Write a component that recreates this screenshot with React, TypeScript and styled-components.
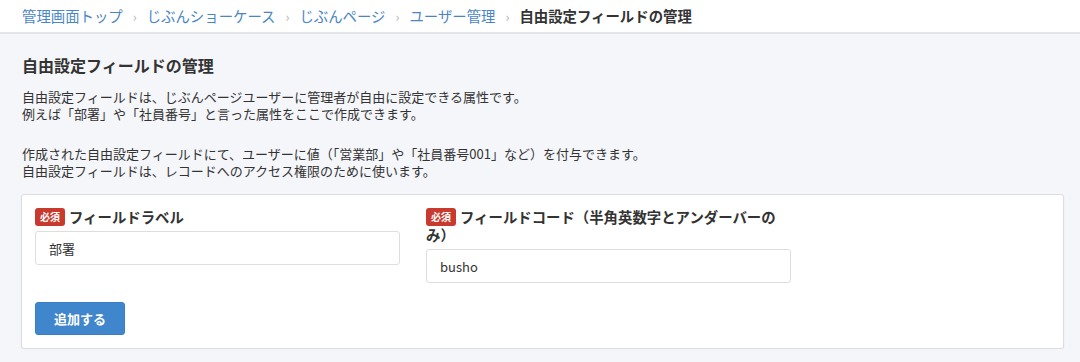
import React from 'react';
import styled, { createGlobalStyle } from 'styled-components';

const GlobalStyle = createGlobalStyle`
  html, body {
    margin: 0;
    padding: 0;
    background: #f5f6fa;
    font-family: 'Noto Sans CJK JP', 'Noto Sans', sans-serif;
    color: #333;
  }
`;

const Breadcrumb = styled.nav`
  height: 32px;
  background: #fff;
  border-bottom: 2px solid #e3e4e8;
  display: flex;
  align-items: center;
  padding: 0 22px;
  font-size: 14.4px;
  line-height: 1;
`;

const Crumb = styled.a<{ $current?: boolean }>`
  color: ${(p) => (p.$current ? '#333' : '#4a86c4')};
  font-weight: ${(p) => (p.$current ? 700 : 400)};
  text-decoration: none;
`;

const Sep = styled.span`
  color: #b5b5b5;
  font-size: 13px;
  margin: 0 10px;
`;

const Main = styled.main`
  padding: 19px 16px 0 21px;
`;

const Title = styled.h1`
  margin: 0 0 0 1px;
  font-size: 16px;
  line-height: 24px;
  font-weight: 700;
`;

const Desc = styled.p`
  margin: 11px 0 0 1px;
  font-size: 13px;
  line-height: 17px;
  & + & {
    margin-top: 23px;
  }
`;

const Card = styled.section`
  margin-top: 15px;
  background: #fff;
  border: 1px solid #dcdde2;
  border-radius: 3px;
  box-shadow: 0 1px 2px rgba(0, 0, 0, 0.06);
  padding: 13px 14px 13px 13px;
`;

const Fields = styled.div`
  display: grid;
  grid-template-columns: 365px 365px;
  column-gap: 26px;
  align-items: start;
`;

const Field = styled.div`
  display: flex;
  flex-direction: column;
`;

const Label = styled.label`
  font-size: 14.4px;
  font-weight: 700;
  line-height: 18px;
  margin-bottom: 5px;
`;

const Required = styled.span`
  display: inline-block;
  background: #c8392e;
  color: #fff;
  font-size: 10px;
  font-weight: 700;
  line-height: 18px;
  height: 18px;
  padding: 0 5px;
  border-radius: 3px;
  margin-right: 4px;
  vertical-align: top;
`;

const Input = styled.input`
  box-sizing: border-box;
  height: 34px;
  width: 100%;
  border: 1px solid #dedede;
  border-radius: 3px;
  padding: 0 13px;
  font-family: inherit;
  font-size: 13px;
  color: #333;
  background: #fff;
  outline: none;
`;

const Button = styled.button`
  margin-top: 19px;
  height: 33px;
  padding: 0 18px;
  background: #3f86cc;
  border: 1px solid #3a7fc4;
  border-radius: 3px;
  color: #fff;
  font-family: inherit;
  font-size: 13px;
  font-weight: 700;
  cursor: pointer;
`;

export default function App() {
  return (
    <>
      <GlobalStyle />
      <Breadcrumb>
        <Crumb href="#">管理画面トップ</Crumb>
        <Sep>›</Sep>
        <Crumb href="#">じぶんショーケース</Crumb>
        <Sep>›</Sep>
        <Crumb href="#">じぶんページ</Crumb>
        <Sep>›</Sep>
        <Crumb href="#">ユーザー管理</Crumb>
        <Sep>›</Sep>
        <Crumb $current>自由設定フィールドの管理</Crumb>
      </Breadcrumb>
      <Main>
        <Title>自由設定フィールドの管理</Title>
        <Desc>
          自由設定フィールドは、じぶんページユーザーに管理者が自由に設定できる属性です。
          <br />
          例えば「部署」や「社員番号」と言った属性をここで作成できます。
        </Desc>
        <Desc>
          作成された自由設定フィールドにて、ユーザーに値（「営業部」や「社員番号001」など）を付与できます。
          <br />
          自由設定フィールドは、レコードへのアクセス権限のために使います。
        </Desc>
        <Card>
          <Fields>
            <Field>
              <Label>
                <Required>必須</Required>フィールドラベル
              </Label>
              <Input defaultValue="部署" />
            </Field>
            <Field>
              <Label>
                <Required>必須</Required>フィールドコード（半角英数字とアンダーバーのみ）
              </Label>
              <Input defaultValue="busho" />
            </Field>
          </Fields>
          <Button>追加する</Button>
        </Card>
      </Main>
    </>
  );
}
